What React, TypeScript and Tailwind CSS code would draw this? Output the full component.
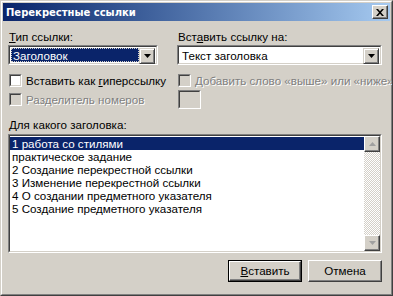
import React from "react";

const font = { fontFamily: '"Liberation Sans", Arial, sans-serif' };

function Arrow({ disabled = false }: { disabled?: boolean }) {
  return (
    <svg width="7" height="4" viewBox="0 0 7 4">
      <path d="M0 0h7L3.5 4z" fill={disabled ? "#808080" : "#000"} />
    </svg>
  );
}

function ScrollBtn({ up }: { up?: boolean }) {
  return (
    <div className="w-[16px] h-[16px] bg-[#d4d0c8] border border-t-white border-l-white border-r-[#404040] border-b-[#404040] flex items-center justify-center shadow-[inset_-1px_-1px_0_#808080]">
      <svg width="7" height="4" viewBox="0 0 7 4" className={up ? "rotate-180" : ""}>
        <path d="M0 0h7L3.5 4z" fill="#a0a0a0" />
      </svg>
    </div>
  );
}

function Sunken({ className = "", children }: { className?: string; children?: React.ReactNode }) {
  return (
    <div className={`border border-t-[#808080] border-l-[#808080] border-r-white border-b-white ${className}`}>
      <div className="w-full h-full border border-t-[#404040] border-l-[#404040] border-r-[#d4d0c8] border-b-[#d4d0c8] flex">
        {children}
      </div>
    </div>
  );
}

function Check({ disabled, label }: { disabled?: boolean; label: React.ReactNode }) {
  return (
    <div className="flex items-center h-[13px] whitespace-nowrap">
      <Sunken className="w-[13px] h-[13px] shrink-0">
        <div className={`w-full h-full ${disabled ? "bg-[#d4d0c8]" : "bg-white"}`} />
      </Sunken>
      <span className={`ml-[4px] leading-[13px] ${disabled ? "text-[#808080] [text-shadow:1px_1px_0_#fff]" : "text-black"}`}>{label}</span>
    </div>
  );
}

function Button({ children, def }: { children: React.ReactNode; def?: boolean }) {
  return (
    <div className={`w-[74px] h-[22px] ${def ? "border border-black" : ""}`}>
      <div className="w-full h-full border border-t-white border-l-white border-r-[#404040] border-b-[#404040] shadow-[inset_-1px_-1px_0_#808080] bg-[#d4d0c8] flex items-center justify-center text-black">
        {children}
      </div>
    </div>
  );
}

export default function App() {
  const items = [
    "1 работа со стилями",
    "практическое задание",
    "2 Создание перекрестной ссылки",
    "3 Изменение перекрестной ссылки",
    "4 О создании предметного указателя",
    "5 Создание предметного указателя",
  ];
  return (
    <div style={font} className="w-[393px] h-[296px] bg-[#d4d0c8] border border-t-[#d4d0c8] border-l-[#d4d0c8] border-r-[#404040] border-b-[#404040] overflow-hidden">
      <div className="w-full h-full border border-t-white border-l-white border-r-[#808080] border-b-[#808080] p-[1px] flex flex-col">
        {/* title bar */}
        <div className="h-[18px] bg-gradient-to-r from-[#0a246a] to-[#a6caf0] flex items-center pl-[2px] pr-[2px]">
          <span className="text-white font-bold text-[10px] flex-1 ml-[1px] font-['DejaVu_Sans',sans-serif]">Перекрестные ссылки</span>
          <div className="w-[16px] h-[14px] bg-[#d4d0c8] border border-t-white border-l-white border-r-[#404040] border-b-[#404040] shadow-[inset_-1px_-1px_0_#808080] flex items-center justify-center">
            <svg width="8" height="7" viewBox="0 0 8 7">
              <path d="M0 0h2l2 2.2L6 0h2L5 3.5 8 7H6L4 4.8 2 7H0l3-3.5z" fill="#000" />
            </svg>
          </div>
        </div>

        {/* content */}
        <div className="flex-1 px-[5px] pt-[9px] text-[11.6px] text-black">
          <div className="flex">
            <div className="w-[150px]">
              <div className="h-[13px] leading-[13px] ml-[1px]"><u>Т</u>ип ссылки:</div>
              <Sunken className="w-[150px] h-[20px] mt-[2px]">
                <div className="flex-1 bg-white p-[1px] flex">
                  <div className="flex-1 bg-[#0a246a] text-white pl-[2px] leading-[16px] outline outline-1 outline-dotted outline-[#d4d0c8] -outline-offset-1">Заголовок</div>
                  <div className="w-[16px] h-[16px] bg-[#d4d0c8] border border-t-[#d4d0c8] border-l-[#d4d0c8] border-r-[#404040] border-b-[#404040] shadow-[inset_1px_1px_0_#fff,inset_-1px_-1px_0_#808080] flex items-center justify-center">
                    <Arrow />
                  </div>
                </div>
              </Sunken>
            </div>
            <div className="ml-[19px] w-[205px]">
              <div className="h-[13px] leading-[13px] ml-[1px]">Вст<u>а</u>вить ссылку на:</div>
              <Sunken className="w-[205px] h-[20px] mt-[2px]">
                <div className="flex-1 bg-white p-[1px] flex">
                  <div className="flex-1 pl-[2px] leading-[16px]">Текст заголовка</div>
                  <div className="w-[16px] h-[16px] bg-[#d4d0c8] border border-t-[#d4d0c8] border-l-[#d4d0c8] border-r-[#404040] border-b-[#404040] shadow-[inset_1px_1px_0_#fff,inset_-1px_-1px_0_#808080] flex items-center justify-center">
                    <Arrow />
                  </div>
                </div>
              </Sunken>
            </div>
          </div>

          <div className="flex mt-[9px]">
            <div className="w-[169px] shrink-0 pl-[1px] flex flex-col gap-[6px]">
              <Check label={<>Вставить как <u>г</u>иперссылку</>} />
              <Check disabled label="Разделитель номеров" />
            </div>
            <div className="pl-[1px] flex flex-col flex-1 min-w-0">
              <Check disabled label="Добавить слово «выше» или «ниже»" />
              <Sunken className="w-[23px] h-[19px] mt-[3px]">
                <div className="flex-1 bg-[#d4d0c8]" />
              </Sunken>
            </div>
          </div>

          <div className="h-[13px] leading-[13px] ml-[1px] mt-[9px]"><u>Д</u>ля какого заголовка:</div>
          <Sunken className="w-[374px] h-[119px] mt-[3px]">
            <div className="flex-1 bg-white flex">
              <div className="flex-1 pt-[1px] overflow-hidden whitespace-nowrap">
                {items.map((t, i) => (
                  <div key={i} className={`h-[13px] leading-[13px] pl-[2px] ${i === 0 ? "bg-[#0a246a] text-white" : ""}`}>{t}</div>
                ))}
              </div>
              <div className="w-[16px] flex flex-col bg-[repeating-conic-gradient(#d4d0c8_0_25%,#fff_0_50%)] [background-size:2px_2px]">
                <ScrollBtn up />
                <div className="flex-1" />
                <ScrollBtn />
              </div>
            </div>
          </Sunken>

          <div className="flex justify-end gap-[6px] mt-[7px] mr-[3px]">
            <Button def><u>В</u>ставить</Button>
            <Button>Отмена</Button>
          </div>
        </div>
      </div>
    </div>
  );
}
